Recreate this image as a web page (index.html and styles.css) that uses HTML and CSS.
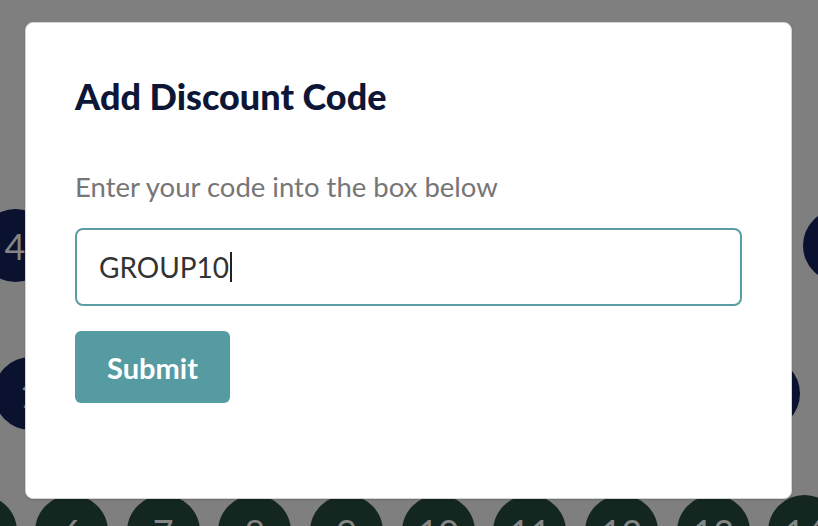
FILE: index.html
```html
<!DOCTYPE html>
<html lang="en">
<head>
<meta charset="utf-8">
<title>Add Discount Code</title>
<link rel="stylesheet" href="styles.css">
</head>
<body>
<div class="calendar">
  <div class="cal-row row-a">
    <span class="day navy">4</span><span class="day navy">5</span><span class="day navy">6</span><span class="day navy">7</span><span class="day navy">8</span><span class="day navy">9</span><span class="day navy">10</span><span class="day navy">11</span><span class="day navy">12</span><span class="day navy">13</span>
  </div>
  <div class="cal-row row-b">
    <span class="day navy">1</span><span class="day navy">2</span><span class="day navy">3</span><span class="day navy">4</span><span class="day navy">5</span><span class="day navy">6</span><span class="day navy">7</span><span class="day navy">8</span><span class="day navy">9</span>
  </div>
  <div class="cal-row row-c">
    <span class="day green">5</span><span class="day green">6</span><span class="day green">7</span><span class="day green">8</span><span class="day green">9</span><span class="day green">10</span><span class="day green">11</span><span class="day green">12</span><span class="day green">13</span><span class="day green">14</span>
  </div>
</div>
<div class="overlay">
  <div class="modal" role="dialog" aria-labelledby="dlg-title">
    <h2 id="dlg-title" class="modal-title">Add Discount Code</h2>
    <p class="modal-text">Enter your code into the box below</p>
    <div class="code-input"><span class="code-value">GROUP10</span><span class="caret"></span></div>
    <button class="submit-btn" type="button">Submit</button>
  </div>
</div>
</body>
</html>
```
FILE: styles.css
```css
html, body {
  margin: 0;
  padding: 0;
}
body {
  width: 818px;
  height: 526px;
  overflow: hidden;
  background: #7f7f7f;
  font-family: Lato, "Open Sans", sans-serif;
  position: relative;
}
.calendar {
  display: flex;
  flex-direction: column;
  padding-top: 209px;
}
.cal-row {
  display: flex;
  gap: 18.67px;
  flex-shrink: 0;
}
.row-a { margin-left: -21.5px; }
.row-b { margin-left: -6.5px; margin-top: 75px; }
.row-c { margin-left: -56.5px; margin-top: 65px; }
.day {
  flex: 0 0 73px;
  width: 73px;
  height: 73px;
  border-radius: 50%;
  display: flex;
  align-items: center;
  justify-content: center;
  color: #858585;
  font-size: 36px;
  font-weight: 400;
}
.navy { background: #0a1230; }
.green { background: #132620; }

.overlay {
  position: absolute;
  inset: 0;
}
.modal {
  position: absolute;
  left: 25px;
  top: 22px;
  width: 767px;
  height: 477px;
  box-sizing: border-box;
  background: #fff;
  border: 1px solid #d4d4d4;
  border-radius: 8px;
  box-shadow: 0 1px 2px rgba(0,0,0,0.15);
  padding: 0 49px;
}
.modal-title {
  margin: 0;
  padding-top: 51px;
  font-size: 36px;
  line-height: 44px;
  font-weight: 900;
  color: #0d1637;
}
.modal-text {
  margin: 52px 0 0;
  font-size: 27.5px;
  line-height: 34px;
  color: #767676;
}
.code-input {
  margin-top: 24px;
  height: 78px;
  width: 667px;
  box-sizing: border-box;
  border: 2px solid #5a9ea3;
  border-radius: 8px;
  display: flex;
  align-items: center;
  padding-left: 22px;
  font-size: 28px;
  color: #333;
}
.caret {
  display: inline-block;
  width: 1.5px;
  height: 30px;
  background: #222;
  margin-left: 1px;
}
.submit-btn {
  margin-top: 25px;
  width: 155px;
  height: 72px;
  border: 0;
  border-radius: 6px;
  background: #569ba1;
  color: #fff;
  font-family: Lato, sans-serif;
  font-weight: 700;
  font-size: 29px;
  padding: 0;
}
```
